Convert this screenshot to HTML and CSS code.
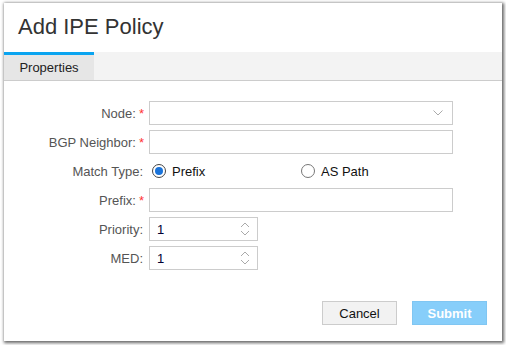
FILE: index.html
```html
<!DOCTYPE html>
<html lang="en">
<head>
  <meta charset="UTF-8">
  <title>Add IPE Policy</title>
  <link rel="stylesheet" href="styles.css">
</head>
<body>
  <div class="dialog">
    <header class="dialog-header">
      <h1>Add IPE Policy</h1>
    </header>

    <div class="tabs">
      <div class="tab active">Properties</div>
    </div>

    <!-- Policy form -->
    <form class="policy-form">
      <div class="row">
        <label class="req">Node:</label>
        <div class="select">
          <svg class="chevron" width="10" height="6" viewBox="0 0 10 6"><path d="M0.5 0.5 L5 5 L9.5 0.5" fill="none" stroke="#aaa" stroke-width="1"/></svg>
        </div>
      </div>
      <div class="row">
        <label class="req">BGP Neighbor:</label>
        <input type="text" class="field">
      </div>
      <div class="row">
        <label>Match Type:</label>
        <div class="radios">
          <span class="radio-opt"><span class="radio checked"></span>Prefix</span>
          <span class="radio-opt"><span class="radio"></span>AS Path</span>
        </div>
      </div>
      <div class="row">
        <label class="req">Prefix:</label>
        <input type="text" class="field">
      </div>
      <div class="row">
        <label>Priority:</label>
        <div class="spin">
          <span>1</span>
          <svg width="10" height="16" viewBox="0 0 10 16"><path d="M1 6 L5 2 L9 6 M1 10 L5 14 L9 10" fill="none" stroke="#aaa" stroke-width="1"/></svg>
        </div>
      </div>
      <div class="row">
        <label>MED:</label>
        <div class="spin">
          <span>1</span>
          <svg width="10" height="16" viewBox="0 0 10 16"><path d="M1 6 L5 2 L9 6 M1 10 L5 14 L9 10" fill="none" stroke="#aaa" stroke-width="1"/></svg>
        </div>
      </div>
    </form>

    <footer class="dialog-footer">
      <button type="button" class="btn">Cancel</button>
      <button type="button" class="btn primary">Submit</button>
    </footer>
  </div>
</body>
</html>
```

FILE: styles.css
```css
/* Base */
body {
  margin: 0;
  padding: 3px 4px 4px 4px;
  background-color: #fff;
  font-family: "Liberation Sans", Arial, sans-serif;
  font-size: 13px;
  color: #333;
}

.dialog {
  width: 498px;
  height: 338px;
  background-color: #fff;
  box-shadow: 1px 1px 3px 1px rgba(0, 0, 0, 0.6);
  display: flex;
  flex-direction: column;
}

.dialog-header {
  height: 49px;
  box-sizing: border-box;
  padding: 11px 14px;
}

.dialog-header h1 {
  margin: 0;
  font-size: 22px;
  line-height: 26px;
  font-weight: normal;
  color: #333;
}

/* Tabs */
.tabs {
  display: flex;
  height: 29px;
  box-sizing: border-box;
  background-color: #f3f3f3;
  border-bottom: 1px solid #ccc;
}

.tab {
  width: 90px;
  box-sizing: border-box;
  text-align: center;
  font-size: 13px;
  line-height: 25px;
  color: #222;
  border-top: 3px solid transparent;
}

.tab.active {
  background-color: #e6e6e6;
  border-top-color: #0aa4f0;
}

/* Form */
.policy-form {
  margin: 0;
  padding-top: 20px;
  display: flex;
  flex-direction: column;
  gap: 5px;
}

.row {
  display: flex;
  align-items: center;
  height: 24px;
}

.row label {
  width: 145px;
  box-sizing: border-box;
  text-align: right;
  color: #555;
  padding-right: 6px;
}

.row label.req {
  padding-right: 5px;
}

.row label.req::after {
  content: "*";
  color: #f33;
  margin-left: 3px;
}

.field,
.select {
  width: 304px;
  height: 24px;
  box-sizing: border-box;
  border: 1px solid #ccc;
  margin: 0;
  padding: 0 6px;
  font: inherit;
  background: #fff;
}

.select {
  display: flex;
  align-items: center;
  justify-content: flex-end;
  padding-right: 9px;
}

.radios {
  display: flex;
  width: 304px;
}

.radio-opt {
  display: flex;
  align-items: center;
  color: #111;
}

.radio-opt:first-child {
  width: 152px;
  box-sizing: border-box;
  padding-left: 3px;
}

.radio {
  width: 14px;
  height: 14px;
  box-sizing: border-box;
  border: 1px solid #777;
  border-radius: 50%;
  margin-right: 6px;
  display: flex;
  align-items: center;
  justify-content: center;
}

.radio.checked {
  border-color: #444;
}

.radio.checked::after {
  content: "";
  width: 8px;
  height: 8px;
  border-radius: 50%;
  background-color: #1a73d9;
}

.spin {
  width: 109px;
  height: 24px;
  box-sizing: border-box;
  border: 1px solid #ccc;
  display: flex;
  align-items: center;
  justify-content: space-between;
  padding: 0 7px;
  color: #000033;
}

/* Footer buttons */
.dialog-footer {
  margin-top: auto;
  display: flex;
  justify-content: flex-end;
  gap: 15px;
  padding: 0 15px 16px 0;
}

.btn {
  width: 75px;
  height: 24px;
  font-family: inherit;
  font-size: 13px;
  border: 1px solid #ccc;
  background-color: #f2f2f2;
  color: #111;
  padding: 0;
}

.btn.primary {
  background-color: #87cefa;
  border-color: #80c6f2;
  color: #fff;
  font-weight: bold;
}
```
